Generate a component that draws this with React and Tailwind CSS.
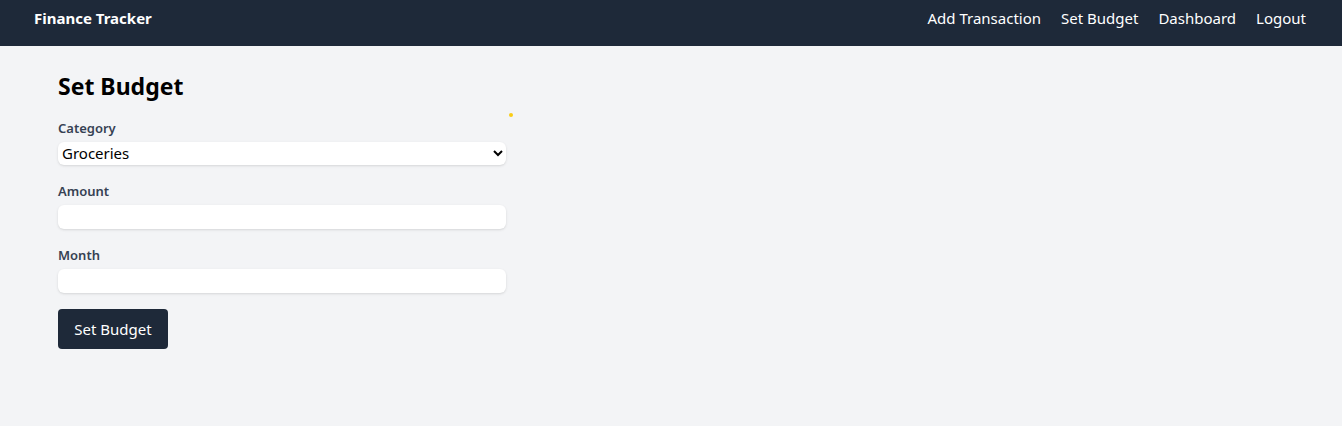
export default function App() {
  return (
    <div className="min-h-[426px] bg-gray-100 font-['Noto_Sans',sans-serif] relative">
      <nav className="h-[46px] bg-gray-800 flex items-start justify-between pl-[34px] pr-[36px] pt-[6px] text-white">
        <span className="font-bold text-[15px] leading-6">Finance Tracker</span>
        <div className="flex items-center gap-5 text-[15px] leading-6">
          <a>Add Transaction</a>
          <a>Set Budget</a>
          <a>Dashboard</a>
          <a>Logout</a>
        </div>
      </nav>
      <main className="pl-[58px] pt-6">
        <div className="max-w-md">
          <h2 className="text-[23px] leading-8 font-bold mb-4 text-black">Set Budget</h2>
          <div className="mb-4">
            <label className="block text-[13px] leading-5 font-semibold text-gray-700 mb-[3px]">Category</label>
            <select className="w-full h-[23px] bg-white rounded-md shadow-sm text-[15px] text-black">
              <option>Groceries</option>
            </select>
          </div>
          <div className="mb-4">
            <label className="block text-[13px] leading-5 font-semibold text-gray-700 mb-1">Amount</label>
            <input type="number" className="w-full h-6 bg-white rounded-md shadow-sm" />
          </div>
          <div className="mb-4">
            <label className="block text-[13px] leading-5 font-semibold text-gray-700 mb-1">Month</label>
            <input type="text" className="w-full h-6 bg-white rounded-md shadow-sm" />
          </div>
          <button className="h-10 w-[110px] bg-gray-800 text-white rounded text-[15px]">Set Budget</button>
        </div>
      </main>
      <span className="absolute left-[509px] top-[113px] w-1 h-1 rounded-full bg-[#facc15]"></span>
    </div>
  );
}
